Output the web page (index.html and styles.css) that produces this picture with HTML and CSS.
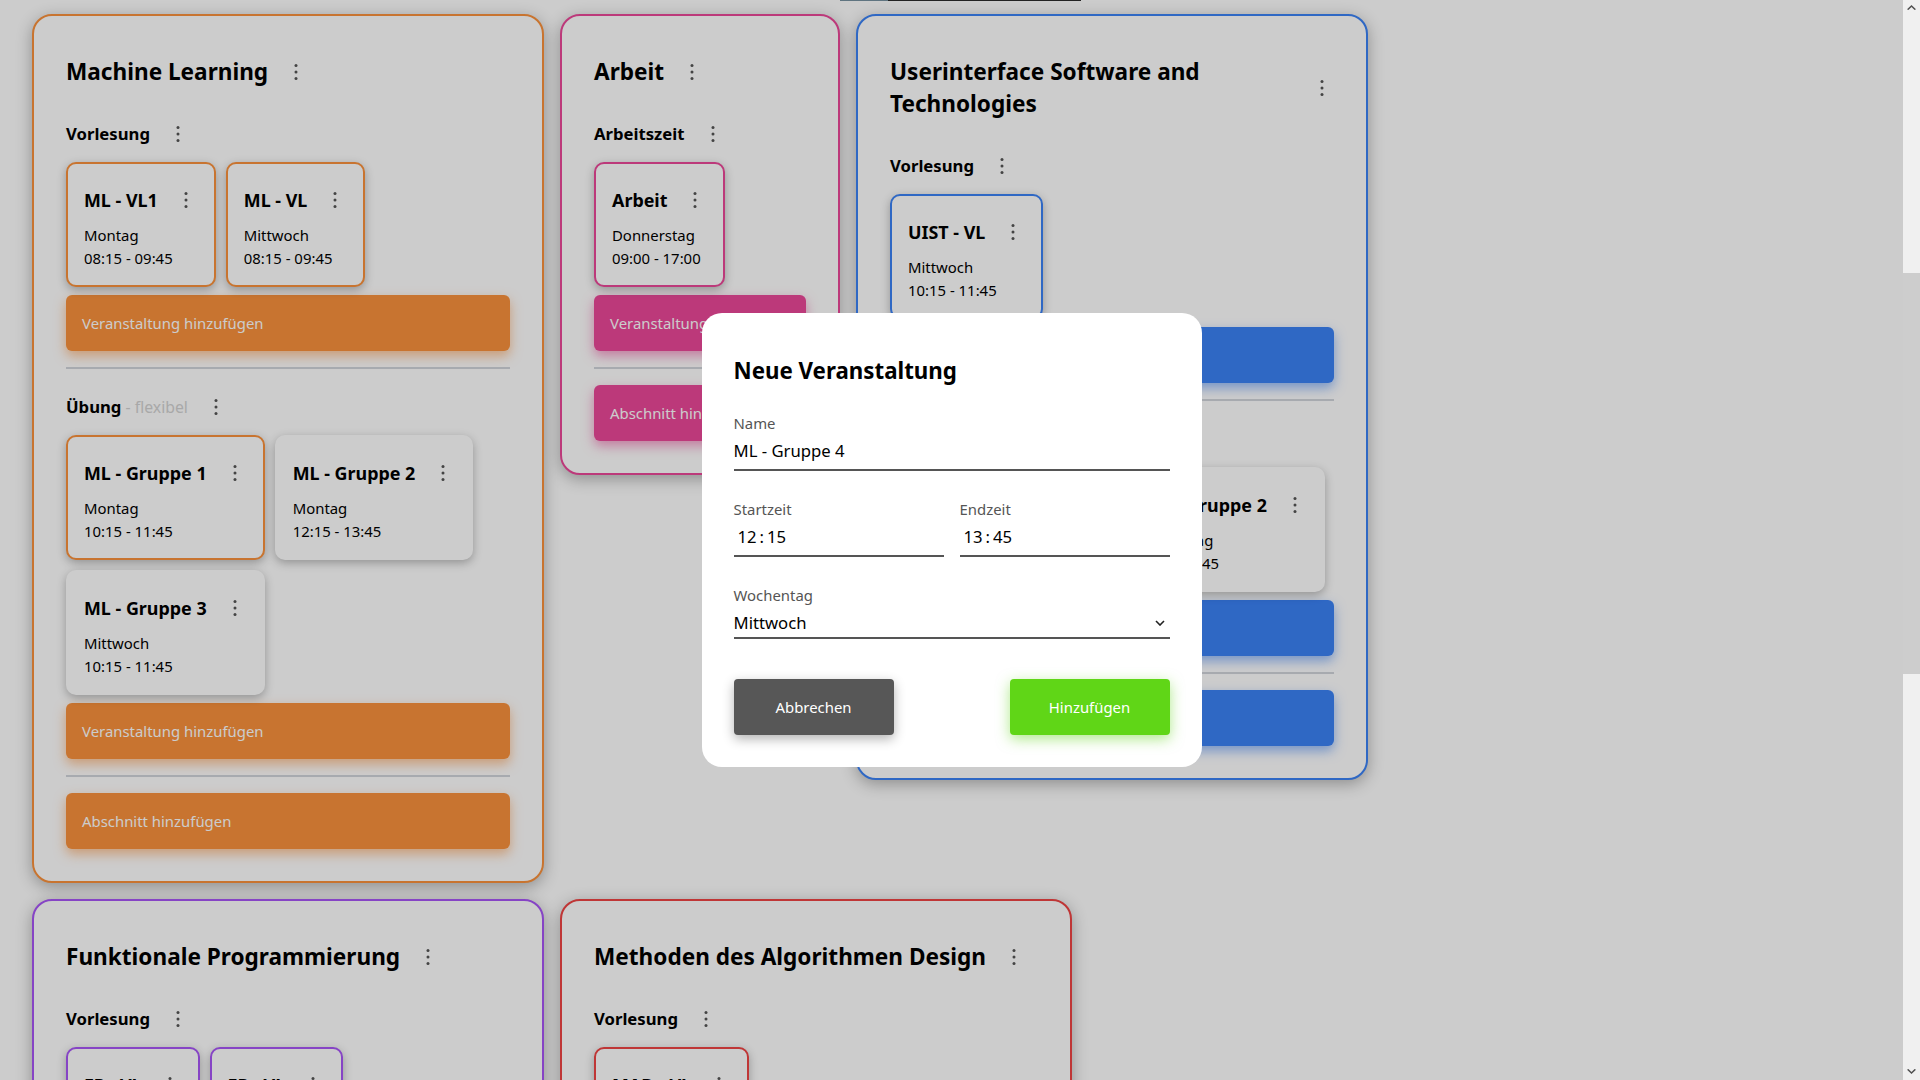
FILE: index.html
```html
<!DOCTYPE html>
<html lang="de">
<head>
<meta charset="utf-8">
<title>Stundenplan</title>
<link rel="stylesheet" href="styles.css">
</head>
<body>
<div class="top-strip"><span class="seg-a"></span><span class="seg-b"></span></div>

<main class="board">

  <section class="course orange">
    <div class="course-head">
      <h2>Machine Learning</h2>
      <svg class="more" viewBox="0 0 24 24"><circle cx="12" cy="5.5" r="1.5"/><circle cx="12" cy="12" r="1.5"/><circle cx="12" cy="18.5" r="1.5"/></svg>
    </div>
    <div class="block">
      <div class="section-head"><h3>Vorlesung</h3><svg class="more" viewBox="0 0 24 24"><circle cx="12" cy="5.5" r="1.5"/><circle cx="12" cy="12" r="1.5"/><circle cx="12" cy="18.5" r="1.5"/></svg></div>
      <div class="events">
        <div class="event marked">
          <div class="event-head"><h4>ML - VL1</h4><svg class="more" viewBox="0 0 24 24"><circle cx="12" cy="5.5" r="1.5"/><circle cx="12" cy="12" r="1.5"/><circle cx="12" cy="18.5" r="1.5"/></svg></div>
          <p>Montag</p><p>08:15 - 09:45</p>
        </div>
        <div class="event marked">
          <div class="event-head"><h4>ML - VL</h4><svg class="more" viewBox="0 0 24 24"><circle cx="12" cy="5.5" r="1.5"/><circle cx="12" cy="12" r="1.5"/><circle cx="12" cy="18.5" r="1.5"/></svg></div>
          <p>Mittwoch</p><p>08:15 - 09:45</p>
        </div>
      </div>
      <button class="add">Veranstaltung hinzufügen</button>
    </div>
    <hr class="divider">
    <div class="block">
      <div class="section-head"><h3>Übung<span class="hint"> - flexibel</span></h3><svg class="more" viewBox="0 0 24 24"><circle cx="12" cy="5.5" r="1.5"/><circle cx="12" cy="12" r="1.5"/><circle cx="12" cy="18.5" r="1.5"/></svg></div>
      <div class="events">
        <div class="event marked">
          <div class="event-head"><h4>ML - Gruppe 1</h4><svg class="more" viewBox="0 0 24 24"><circle cx="12" cy="5.5" r="1.5"/><circle cx="12" cy="12" r="1.5"/><circle cx="12" cy="18.5" r="1.5"/></svg></div>
          <p>Montag</p><p>10:15 - 11:45</p>
        </div>
        <div class="event">
          <div class="event-head"><h4>ML - Gruppe 2</h4><svg class="more" viewBox="0 0 24 24"><circle cx="12" cy="5.5" r="1.5"/><circle cx="12" cy="12" r="1.5"/><circle cx="12" cy="18.5" r="1.5"/></svg></div>
          <p>Montag</p><p>12:15 - 13:45</p>
        </div>
        <div class="event">
          <div class="event-head"><h4>ML - Gruppe 3</h4><svg class="more" viewBox="0 0 24 24"><circle cx="12" cy="5.5" r="1.5"/><circle cx="12" cy="12" r="1.5"/><circle cx="12" cy="18.5" r="1.5"/></svg></div>
          <p>Mittwoch</p><p>10:15 - 11:45</p>
        </div>
      </div>
      <button class="add">Veranstaltung hinzufügen</button>
    </div>
    <hr class="divider">
    <button class="add section-add">Abschnitt hinzufügen</button>
  </section>

  <section class="course pink narrow">
    <div class="course-head">
      <h2>Arbeit</h2>
      <svg class="more" viewBox="0 0 24 24"><circle cx="12" cy="5.5" r="1.5"/><circle cx="12" cy="12" r="1.5"/><circle cx="12" cy="18.5" r="1.5"/></svg>
    </div>
    <div class="block">
      <div class="section-head"><h3>Arbeitszeit</h3><svg class="more" viewBox="0 0 24 24"><circle cx="12" cy="5.5" r="1.5"/><circle cx="12" cy="12" r="1.5"/><circle cx="12" cy="18.5" r="1.5"/></svg></div>
      <div class="events">
        <div class="event marked">
          <div class="event-head"><h4>Arbeit</h4><svg class="more" viewBox="0 0 24 24"><circle cx="12" cy="5.5" r="1.5"/><circle cx="12" cy="12" r="1.5"/><circle cx="12" cy="18.5" r="1.5"/></svg></div>
          <p>Donnerstag</p><p>09:00 - 17:00</p>
        </div>
      </div>
      <button class="add">Veranstaltung hinzufügen</button>
    </div>
    <hr class="divider">
    <button class="add section-add">Abschnitt hinzufügen</button>
  </section>

  <section class="course blue">
    <div class="course-head">
      <h2>Userinterface Software and Technologies</h2>
      <svg class="more" viewBox="0 0 24 24"><circle cx="12" cy="5.5" r="1.5"/><circle cx="12" cy="12" r="1.5"/><circle cx="12" cy="18.5" r="1.5"/></svg>
    </div>
    <div class="block">
      <div class="section-head"><h3>Vorlesung</h3><svg class="more" viewBox="0 0 24 24"><circle cx="12" cy="5.5" r="1.5"/><circle cx="12" cy="12" r="1.5"/><circle cx="12" cy="18.5" r="1.5"/></svg></div>
      <div class="events">
        <div class="event marked">
          <div class="event-head"><h4>UIST - VL</h4><svg class="more" viewBox="0 0 24 24"><circle cx="12" cy="5.5" r="1.5"/><circle cx="12" cy="12" r="1.5"/><circle cx="12" cy="18.5" r="1.5"/></svg></div>
          <p>Mittwoch</p><p>10:15 - 11:45</p>
        </div>
      </div>
      <button class="add">Veranstaltung hinzufügen</button>
    </div>
    <hr class="divider">
    <div class="block">
      <div class="section-head"><h3>Übung</h3><svg class="more" viewBox="0 0 24 24"><circle cx="12" cy="5.5" r="1.5"/><circle cx="12" cy="12" r="1.5"/><circle cx="12" cy="18.5" r="1.5"/></svg></div>
      <div class="events">
        <div class="event marked">
          <div class="event-head"><h4>UIST - Gruppe 1</h4><svg class="more" viewBox="0 0 24 24"><circle cx="12" cy="5.5" r="1.5"/><circle cx="12" cy="12" r="1.5"/><circle cx="12" cy="18.5" r="1.5"/></svg></div>
          <p>Donnerstag</p><p>10:15 - 11:45</p>
        </div>
        <div class="event">
          <div class="event-head"><h4>UIST - Gruppe 2</h4><svg class="more" viewBox="0 0 24 24"><circle cx="12" cy="5.5" r="1.5"/><circle cx="12" cy="12" r="1.5"/><circle cx="12" cy="18.5" r="1.5"/></svg></div>
          <p>Donnerstag</p><p>12:15 - 13:45</p>
        </div>
      </div>
      <button class="add">Veranstaltung hinzufügen</button>
    </div>
    <hr class="divider">
    <button class="add section-add">Abschnitt hinzufügen</button>
  </section>

  <section class="course purple">
    <div class="course-head">
      <h2>Funktionale Programmierung</h2>
      <svg class="more" viewBox="0 0 24 24"><circle cx="12" cy="5.5" r="1.5"/><circle cx="12" cy="12" r="1.5"/><circle cx="12" cy="18.5" r="1.5"/></svg>
    </div>
    <div class="block">
      <div class="section-head"><h3>Vorlesung</h3><svg class="more" viewBox="0 0 24 24"><circle cx="12" cy="5.5" r="1.5"/><circle cx="12" cy="12" r="1.5"/><circle cx="12" cy="18.5" r="1.5"/></svg></div>
      <div class="events">
        <div class="event marked">
          <div class="event-head"><h4>FP - VL</h4><svg class="more" viewBox="0 0 24 24"><circle cx="12" cy="5.5" r="1.5"/><circle cx="12" cy="12" r="1.5"/><circle cx="12" cy="18.5" r="1.5"/></svg></div>
          <p>Dienstag</p><p>14:15 - 15:45</p>
        </div>
        <div class="event marked">
          <div class="event-head"><h4>FP - VL</h4><svg class="more" viewBox="0 0 24 24"><circle cx="12" cy="5.5" r="1.5"/><circle cx="12" cy="12" r="1.5"/><circle cx="12" cy="18.5" r="1.5"/></svg></div>
          <p>Freitag</p><p>10:15 - 11:45</p>
        </div>
      </div>
      <button class="add">Veranstaltung hinzufügen</button>
    </div>
    <hr class="divider">
    <button class="add section-add">Abschnitt hinzufügen</button>
  </section>

  <section class="course red">
    <div class="course-head">
      <h2>Methoden des Algorithmen Design</h2>
      <svg class="more" viewBox="0 0 24 24"><circle cx="12" cy="5.5" r="1.5"/><circle cx="12" cy="12" r="1.5"/><circle cx="12" cy="18.5" r="1.5"/></svg>
    </div>
    <div class="block">
      <div class="section-head"><h3>Vorlesung</h3><svg class="more" viewBox="0 0 24 24"><circle cx="12" cy="5.5" r="1.5"/><circle cx="12" cy="12" r="1.5"/><circle cx="12" cy="18.5" r="1.5"/></svg></div>
      <div class="events">
        <div class="event marked">
          <div class="event-head"><h4>MAD - VL</h4><svg class="more" viewBox="0 0 24 24"><circle cx="12" cy="5.5" r="1.5"/><circle cx="12" cy="12" r="1.5"/><circle cx="12" cy="18.5" r="1.5"/></svg></div>
          <p>Dienstag</p><p>08:15 - 09:45</p>
        </div>
      </div>
      <button class="add">Veranstaltung hinzufügen</button>
    </div>
    <hr class="divider">
    <button class="add section-add">Abschnitt hinzufügen</button>
  </section>

</main>

<div class="overlay">
  <div class="dialog">
    <h2>Neue Veranstaltung</h2>
    <div class="field">
      <label>Name</label>
      <div class="input">ML - Gruppe 4</div>
    </div>
    <div class="field-row">
      <div class="field">
        <label>Startzeit</label>
        <div class="input time">12<span class="sep">:</span>15</div>
      </div>
      <div class="field">
        <label>Endzeit</label>
        <div class="input time">13<span class="sep">:</span>45</div>
      </div>
    </div>
    <div class="field">
      <label>Wochentag</label>
      <div class="input select"><span>Mittwoch</span><svg class="chev" viewBox="0 0 10 6"><path d="M1 1 L5 5 L9 1"/></svg></div>
    </div>
    <div class="actions">
      <button class="btn cancel">Abbrechen</button>
      <button class="btn confirm">Hinzufügen</button>
    </div>
  </div>
</div>

<div class="scrollbar">
  <svg class="arrow up" viewBox="0 0 9 5"><path d="M0 4.2 L4.5 0 L9 4.2 L7.6 5 L4.5 2.1 L1.4 5 Z"/></svg>
  <div class="thumb"></div>
  <svg class="arrow down" viewBox="0 0 9 5"><path d="M0 0.8 L4.5 5 L9 0.8 L7.6 0 L4.5 2.9 L1.4 0 Z"/></svg>
</div>
</body>
</html>
```
FILE: styles.css
```css
* { box-sizing: border-box; }

html, body {
  margin: 0;
  height: 100%;
  overflow: hidden;
}

body {
  position: relative;
  background: #ffffff;
  color: #000;
  font-family: "Noto Sans", "Open Sans", sans-serif;
  font-size: 14.9px;
}

h2, h3, h4, p { margin: 0; }

.top-strip {
  position: absolute;
  top: 0;
  left: 840px;
  display: flex;
  height: 1px;
}
.top-strip .seg-a { width: 48px; background: #7792a0; }
.top-strip .seg-b { width: 193px; background: #2b2b2b; }

.board {
  display: flex;
  flex-wrap: wrap;
  align-items: flex-start;
  gap: 16px;
  width: 1420px;
  padding: 14px 0 0 32px;
}

.course {
  --c: #fb923c;
  --glow: rgba(251, 146, 60, 0.55);
  width: 512px;
  padding: 32px;
  background: #fff;
  border: 2px solid var(--c);
  border-radius: 20px;
  box-shadow: 0 4px 16px rgba(0, 0, 0, 0.3);
}
.course.narrow { width: 280px; }
.course.pink { --c: #ec4899; --glow: rgba(236, 72, 153, 0.55); }
.course.blue { --c: #3b82f6; --glow: rgba(59, 130, 246, 0.55); }
.course.purple { --c: #a855f7; --glow: rgba(168, 85, 247, 0.55); }
.course.red { --c: #ef4444; --glow: rgba(239, 68, 68, 0.55); }

.more {
  width: 24px;
  height: 24px;
  flex: none;
  fill: #555;
}

.course-head {
  display: flex;
  align-items: center;
  gap: 16px;
  min-height: 48px;
  margin-bottom: 16px;
}
.course-head h2 {
  margin: 8px 0;
  font-size: 22.6px;
  line-height: 32px;
  font-weight: 700;
}

.section-head {
  display: flex;
  align-items: center;
  gap: 16px;
  height: 44px;
}
.section-head h3 {
  font-size: 16.7px;
  line-height: 24px;
  font-weight: 700;
  white-space: nowrap;
}
.section-head .hint {
  font-size: 15.8px;
  font-weight: 400;
  color: #d3d3d3;
}

.events {
  display: flex;
  flex-wrap: wrap;
  gap: 10px;
  margin-top: 6px;
}

.event {
  padding: 16px 16px 15px;
  background: #fff;
  border: 2px solid transparent;
  border-radius: 10px;
  box-shadow: 0 3px 10px rgba(0, 0, 0, 0.28);
}
.event.marked { border-color: var(--c); }

.event-head {
  display: flex;
  align-items: center;
  gap: 16px;
  height: 40px;
  margin-bottom: 4px;
}
.event-head h4 {
  font-size: 17.9px;
  line-height: 24px;
  font-weight: 700;
  white-space: nowrap;
}
.event p {
  font-size: 14.9px;
  line-height: 23px;
  white-space: nowrap;
}

.add {
  display: block;
  width: 100%;
  height: 56px;
  margin-top: 8px;
  padding: 0 16px;
  border: 0;
  border-radius: 6px;
  background: var(--c);
  color: #fff;
  font-family: "Noto Sans", "Open Sans", sans-serif;
  font-size: 14.9px;
  text-align: left;
  white-space: nowrap;
  overflow: hidden;
  box-shadow: 0 5px 12px var(--glow);
}
.add.section-add { margin-top: 0; }

.divider {
  height: 2px;
  margin: 16px 0;
  border: 0;
  background: #d1d5db;
}

/* modal */
.overlay {
  position: fixed;
  top: 0;
  left: 0;
  right: 17px;
  bottom: 0;
  display: flex;
  align-items: center;
  justify-content: center;
  background: rgba(0, 0, 0, 0.2);
}

.dialog {
  width: 500px;
  padding: 32px;
  background: #fff;
  border-radius: 20px;
}
.dialog h2 {
  margin: 10px 0 26px;
  font-size: 22.3px;
  line-height: 32px;
  font-weight: 700;
}

.field { margin-bottom: 28px; }
.field label {
  display: block;
  font-size: 14.9px;
  line-height: 20px;
  color: #555;
}
.field .input {
  padding: 6px 0;
  font-size: 16.7px;
  line-height: 24px;
  border-bottom: 2px solid #555;
}
.field .input.time { padding-left: 4px; }
.field .input.time .sep { margin: 0 3px; }
.field .input.select {
  display: flex;
  align-items: center;
  justify-content: space-between;
  padding: 6px 5px 2px 0;
}
.chev {
  width: 10px;
  height: 6px;
  fill: none;
  stroke: #222;
  stroke-width: 1.6;
}

.field-row {
  display: flex;
  gap: 16px;
}
.field-row .field { flex: 1; }

.actions {
  display: flex;
  justify-content: space-between;
  margin-top: 40px;
}
.btn {
  width: 160px;
  height: 56px;
  border: 0;
  border-radius: 4px;
  color: #fff;
  font-family: "Noto Sans", "Open Sans", sans-serif;
  font-size: 14.9px;
}
.btn.cancel {
  background: #575757;
  box-shadow: 0 4px 12px rgba(0, 0, 0, 0.3);
}
.btn.confirm {
  background: #60d617;
  box-shadow: 0 4px 14px rgba(96, 214, 23, 0.5);
}

/* fake browser scrollbar */
.scrollbar {
  position: fixed;
  top: 0;
  right: 0;
  width: 17px;
  height: 100%;
  background: #f0f0f0;
}
.scrollbar .thumb {
  position: absolute;
  top: 273px;
  left: 0;
  width: 17px;
  height: 401px;
  background: #cdcdcd;
}
.scrollbar .arrow {
  position: absolute;
  left: 4px;
  width: 9px;
  height: 5px;
  fill: #505050;
}
.scrollbar .arrow.up { top: 5px; }
.scrollbar .arrow.down { bottom: 6px; }
```
